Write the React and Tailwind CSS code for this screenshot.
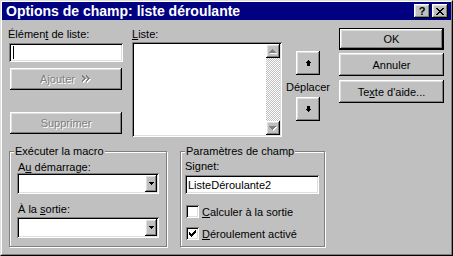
import React from "react";

// Win98-style bevels
const raised =
  "bg-[#c0c0c0] shadow-[inset_-1px_-1px_#000,inset_1px_1px_#fff,inset_-2px_-2px_#808080,inset_2px_2px_#dfdfdf]";
const sunken =
  "bg-white shadow-[inset_1px_1px_#808080,inset_-1px_-1px_#fff,inset_2px_2px_#000,inset_-2px_-2px_#dfdfdf]";
const grayed = "text-[#808080] [text-shadow:1px_1px_0_#fff]";

function Button({ children, className = "", primary = false, disabled = false }) {
  return (
    <div className={`flex ${primary ? "border border-black" : ""} ${className}`}>
      <div className={`flex-1 flex items-center justify-center ${raised} ${disabled ? grayed : ""}`}>
        {children}
      </div>
    </div>
  );
}

function GroupBox({ title, className = "", children }) {
  return (
    <div className={`relative border border-[#808080] shadow-[inset_1px_1px_#fff,1px_1px_#fff] ${className}`}>
      <span className="absolute left-[4px] top-[-7px] bg-[#c0c0c0] px-[1px] leading-[12px]">{title}</span>
      {children}
    </div>
  );
}

function Combo({ className = "" }) {
  return (
    <div className={`flex p-[2px] ${sunken} ${className}`}>
      <div className="flex-1" />
      <div className={`w-[12px] flex items-center justify-center ${raised}`}>
        <svg width="5" height="3" shapeRendering="crispEdges">
          <path d="M0 0h5v1h-5z M1 1h3v1h-3z M2 2h1v1h-1z" fill="#000" />
        </svg>
      </div>
    </div>
  );
}

function Check({ checked = false }) {
  return (
    <div className={`w-[13px] h-[13px] flex items-center justify-center ${sunken}`}>
      {checked && (
        <svg width="7" height="7" shapeRendering="crispEdges">
          <path
            d="M0 2h1v3h-1z M1 3h1v3h-1z M2 4h1v3h-1z M3 3h1v3h-1z M4 2h1v3h-1z M5 1h1v3h-1z M6 0h1v3h-1z"
            fill="#000"
          />
        </svg>
      )}
    </div>
  );
}

function ScrollArrow({ down = false }) {
  const d = down
    ? "M0 0h7v1h-7z M1 1h5v1h-5z M2 2h3v1h-3z M3 3h1v1h-1z"
    : "M3 0h1v1h-1z M2 1h3v1h-3z M1 2h5v1h-5z M0 3h7v1h-7z";
  return (
    <div className={`h-[14px] flex items-center justify-center ${raised}`}>
      <svg width="8" height="5" shapeRendering="crispEdges">
        <path d={d} fill="#fff" transform="translate(1 1)" />
        <path d={d} fill="#808080" />
      </svg>
    </div>
  );
}

function MoveArrow({ down = false }) {
  const d = down
    ? "M1 0h3v3h-3z M0 3h5v1h-5z M1 4h3v1h-3z M2 5h1v1h-1z"
    : "M2 0h1v1h-1z M1 1h3v1h-3z M0 2h5v1h-5z M1 3h3v3h-3z";
  return (
    <svg width="5" height="6" shapeRendering="crispEdges">
      <path d={d} fill="#000" />
    </svg>
  );
}

export default function App() {
  return (
    <div className="w-[453px] h-[256px] border border-t-[#dfdfdf] border-l-[#dfdfdf] border-r-black border-b-black bg-[#c0c0c0] font-['Liberation_Sans',Arial,sans-serif] text-[11px] leading-[12px] text-black select-none">
      <div className="h-full flex flex-col border border-t-white border-l-white border-r-[#808080] border-b-[#808080]">
        {/* Title bar */}
        <div className="h-[18px] shrink-0 flex items-center bg-[#000080] pl-[4px] pr-[3px]">
          <span className="flex-1 text-white font-bold text-[14px] leading-[18px] font-['Liberation_Sans_Narrow','Liberation_Sans',sans-serif]">
            Options de champ: liste déroulante
          </span>
          <div className="flex gap-[2px]">
            <div className={`w-[16px] h-[14px] flex items-center justify-center font-bold text-[11px] leading-[11px] ${raised}`}>
              ?
            </div>
            <div className={`w-[16px] h-[14px] flex items-center justify-center ${raised}`}>
              <svg width="8" height="7" shapeRendering="crispEdges">
                <path
                  d="M0 0h2v1h-2z M6 0h2v1h-2z M1 1h2v1h-2z M5 1h2v1h-2z M2 2h4v1h-4z M3 3h2v1h-2z M2 4h4v1h-4z M1 5h2v1h-2z M5 5h2v1h-2z M0 6h2v1h-2z M6 6h2v1h-2z"
                  fill="#000"
                />
              </svg>
            </div>
          </div>
        </div>

        {/* Body */}
        <div className="flex-1 flex">
          <div className="w-[334px] flex flex-col">
            {/* Top row */}
            <div className="h-[117px] flex items-start">
              {/* Élément de liste */}
              <div className="ml-[6px] w-[115px] flex flex-col">
                <div className="mt-[8px]">
                  Élémen<u>t</u> de liste:
                </div>
                <div className={`ml-[1px] mt-[3px] w-[114px] h-[19px] flex items-center pl-[4px] ${sunken}`}>
                  <span className="w-[1px] h-[13px] bg-black" />
                </div>
                <Button className="ml-[2px] mt-[6px] w-[112px] h-[22px]" disabled>
                  <span>Ajouter</span>
                  <svg width="10" height="8" className="ml-[7px]" shapeRendering="crispEdges">
                    <path
                      d="M1 1h1v1h-1z M1 2h2v1h-2z M2 3h2v1h-2z M3 4h2v1h-2z M2 5h2v1h-2z M1 6h2v1h-2z M1 7h1v1h-1z M5 1h1v1h-1z M5 2h2v1h-2z M6 3h2v1h-2z M7 4h2v1h-2z M6 5h2v1h-2z M5 6h2v1h-2z M5 7h1v1h-1z"
                      fill="#fff"
                    />
                    <path
                      d="M0 0h1v1h-1z M0 1h2v1h-2z M1 2h2v1h-2z M2 3h2v1h-2z M1 4h2v1h-2z M0 5h2v1h-2z M0 6h1v1h-1z M4 0h1v1h-1z M4 1h2v1h-2z M5 2h2v1h-2z M6 3h2v1h-2z M5 4h2v1h-2z M4 5h2v1h-2z M4 6h1v1h-1z"
                      fill="#808080"
                    />
                  </svg>
                </Button>
                <Button className="ml-[2px] mt-[22px] w-[112px] h-[22px]" disabled>
                  Supprimer
                </Button>
              </div>

              {/* Liste */}
              <div className="ml-[9px] w-[150px] flex flex-col">
                <div className="mt-[8px]">
                  <u>L</u>iste:
                </div>
                <div className={`mt-[2px] h-[95px] flex p-[2px] ${sunken}`}>
                  <div className="flex-1" />
                  <div className="w-[14px] flex flex-col">
                    <ScrollArrow />
                    <div className="flex-1 bg-[image:repeating-conic-gradient(#c0c0c0_0%_25%,#fff_0%_50%)] bg-[length:2px_2px]" />
                    <ScrollArrow down />
                  </div>
                </div>
              </div>

              {/* Déplacer */}
              <div className="ml-[4px] w-[44px] flex flex-col items-center">
                <Button className="mt-[31px] w-[24px] h-[24px]">
                  <MoveArrow />
                </Button>
                <div className="mt-[6px]">Déplacer</div>
                <Button className="mt-[4px] w-[24px] h-[24px]">
                  <MoveArrow down />
                </Button>
              </div>
            </div>

            {/* Bottom row: group boxes */}
            <div className="flex items-start">
              <GroupBox title="Exécuter la macro" className="ml-[7px] mt-[14px] w-[158px] h-[96px]">
                <div className="flex flex-col pt-[9px] pl-[7px]">
                  <div className="ml-[1px]">
                    A<u>u</u> démarrage:
                  </div>
                  <Combo className="w-[142px] h-[21px]" />
                  <div className="ml-[1px] mt-[9px]">
                    À la <u>s</u>ortie:
                  </div>
                  <Combo className="mt-[2px] w-[142px] h-[21px]" />
                </div>
              </GroupBox>

              <GroupBox title="Paramètres de champ" className="ml-[13px] mt-[14px] w-[145px] h-[96px]">
                <div className="flex flex-col pt-[8px] pl-[4px]">
                  <div>
                    Si<u>g</u>net:
                  </div>
                  <div className={`mt-[3px] w-[134px] h-[19px] flex items-center px-[3px] ${sunken}`}>
                    ListeDéroulante2
                  </div>
                  <div className="mt-[11px] ml-[1px] flex items-center">
                    <Check />
                    <span className="ml-[3px]">
                      <u>C</u>alculer à la sortie
                    </span>
                  </div>
                  <div className="mt-[9px] ml-[1px] flex items-center">
                    <Check checked />
                    <span className="ml-[3px]">
                      <u>D</u>éroulement activé
                    </span>
                  </div>
                </div>
              </GroupBox>
            </div>
          </div>

          {/* Buttons on the right */}
          <div className="ml-[3px] w-[105px] flex flex-col">
            <Button primary className="mt-[8px] h-[22px]">
              OK
            </Button>
            <Button className="mt-[3px] h-[23px]">Annuler</Button>
            <Button className="mt-[4px] h-[23px]">
              <span>
                Te<u>x</u>te d'aide...
              </span>
            </Button>
          </div>
        </div>
      </div>
    </div>
  );
}
